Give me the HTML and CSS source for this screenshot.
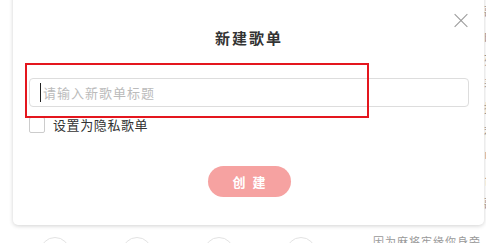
FILE: index.html
```html
<!DOCTYPE html>
<html>
  <head>
    <meta charset="utf-8">
    <link rel="stylesheet" href="styles.css">
  </head>
  <body>
    <div class="page">
      <div class="main">
        <div class="list-row">
          <div class="avatars">
            <span class="avatar"></span>
            <span class="avatar"></span>
            <span class="avatar"></span>
            <span class="avatar"></span>
          </div>
          <div class="song">因为麻将牢缘你身旁</div>
        </div>
      </div>
      <div class="side">
        <p>歌</p>
        <p>曲</p>
        <p>列</p>
        <p>表</p>
        <p>推</p>
        <p>荐</p>
        <p>电</p>
        <p>台</p>
        <p>歌</p>
      </div>
    </div>

    <div class="dialog">
      <h2 class="dialog-title">新建歌单</h2>
      <span class="close-btn"></span>
      <div class="field">
        <input type="text" class="title-input" placeholder="请输入新歌单标题">
        <span class="caret"></span>
      </div>
      <label class="private">
        <span class="check"></span>
        <span>设置为隐私歌单</span>
      </label>
      <div class="actions">
        <button class="create-btn">创 建</button>
      </div>
    </div>
    <div class="mark"></div>
  </body>
</html>
```

FILE: styles.css
```css
/* halaman belakang */
body {
  margin: 0;
  background-color: #fff;
  font-family: "Noto Sans CJK SC", "Noto Sans", sans-serif;
  color: #333;
  overflow: hidden;
}
.page {
  display: flex;
  height: 243px;
  overflow: hidden;
}
.main {
  width: 484px;
  flex-shrink: 0;
}
.list-row {
  display: flex;
  align-items: flex-start;
  margin-top: 234px;
}
.avatars {
  display: flex;
  gap: 52px;
  padding-left: 40px;
  padding-top: 3px;
}
.avatar {
  width: 30px;
  height: 30px;
  box-sizing: border-box;
  border: 1px solid #e3e3e3;
  border-radius: 50%;
}
.song {
  margin-left: 57px;
  font-size: 11px;
  line-height: 14px;
  letter-spacing: 1px;
  color: #999;
}
.side {
  padding-top: 4px;
  font-size: 12px;
  color: #999;
}
.side p {
  margin: 0 0 8px 0;
  line-height: 16px;
}

/* dialog */
.dialog {
  position: absolute;
  left: 13px;
  top: -20px;
  width: 471px;
  height: 245px;
  box-sizing: border-box;
  padding: 0 15px 0 16px;
  background-color: #fff;
  border-radius: 5px;
  box-shadow: 0 1px 4px rgba(0, 0, 0, 0.18);
}
.dialog-title {
  margin: 0;
  padding-top: 49px;
  text-align: center;
  font-size: 15px;
  line-height: 18px;
  font-weight: bold;
  letter-spacing: 2px;
  color: #333;
}
.close-btn {
  position: absolute;
  right: 16px;
  top: 33px;
  width: 14px;
  height: 14px;
}
.close-btn::before,
.close-btn::after {
  content: "";
  position: absolute;
  left: -2px;
  top: 6.5px;
  width: 18px;
  height: 1px;
  background-color: #999;
  transform: rotate(45deg);
}
.close-btn::after {
  transform: rotate(-45deg);
}
.field {
  position: relative;
  margin-top: 31px;
}
.title-input {
  display: block;
  width: 100%;
  height: 29px;
  box-sizing: border-box;
  border: 1px solid #ddd;
  border-radius: 4px;
  padding: 0 0 0 13px;
  font-family: inherit;
  font-size: 13px;
  letter-spacing: 1px;
  outline: none;
}
.title-input::placeholder {
  color: #bbb;
}
.caret {
  position: absolute;
  left: 11px;
  top: 5px;
  width: 1px;
  height: 19px;
  background-color: #222;
}
.private {
  display: flex;
  align-items: center;
  gap: 8px;
  margin-top: 10px;
  font-size: 13px;
  line-height: 16px;
  letter-spacing: 0.6px;
  color: #333;
}
.check {
  width: 16px;
  height: 16px;
  box-sizing: border-box;
  border: 1px solid #ccc;
  border-radius: 2px;
}
.actions {
  display: flex;
  justify-content: center;
  margin-top: 33px;
}
.create-btn {
  width: 83px;
  height: 31px;
  border: none;
  border-radius: 16px;
  background-color: #f6a2a1;
  color: #fff;
  font-family: inherit;
  font-size: 13px;
  font-weight: bold;
  letter-spacing: 2px;
  padding: 0 0 0 2px;
}

/* kotak merah */
.mark {
  position: absolute;
  left: 25px;
  top: 63px;
  width: 344px;
  height: 55px;
  box-sizing: border-box;
  border: 2px solid #e4161e;
}
```
